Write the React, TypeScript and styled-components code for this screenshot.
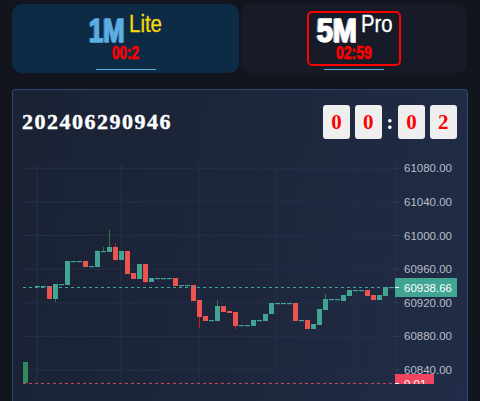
import React from "react";
import styled, { createGlobalStyle } from "styled-components";

const GlobalStyle = createGlobalStyle`
  html, body {
    margin: 0;
    padding: 0;
    background: #12151e;
  }
  body {
    font-family: "Liberation Sans", Arial, sans-serif;
  }
`;

const Page = styled.div`
  box-sizing: border-box;
  height: 401px;
  padding: 4px 12px 0;
  overflow: hidden;
`;

const Tabs = styled.div`
  display: grid;
  grid-template-columns: 227px 226px;
  gap: 2px;
`;

const Tab = styled.div<{ $active: boolean }>`
  box-sizing: border-box;
  height: 69px;
  padding-top: 7px;
  border-radius: 10px;
  background: ${(p) => (p.$active ? "#0e2b45" : "#161b27")};
  display: flex;
  flex-direction: column;
  align-items: center;
`;

const Badge = styled.div<{ $active: boolean }>`
  display: flex;
  flex-direction: column;
  align-items: center;
  padding: 2px 8px 3px;
  border: 2px solid ${(p) => (p.$active ? "#ff0000" : "transparent")};
  border-radius: 5px;
`;

const TitleRow = styled.div`
  display: flex;
  align-items: flex-start;
  gap: 4px;
  height: 30px;
`;

// text squeezed to a narrow face, the box keeps the squeezed width
const Squeezed = styled.span<{ $w: number; $s: number }>`
  display: inline-block;
  width: ${(p) => p.$w}px;
  white-space: nowrap;
  transform: scaleX(${(p) => p.$s});
  transform-origin: 0 0;
`;

const Interval = styled(Squeezed)<{ $color: string; $shade: string }>`
  font-weight: 700;
  font-size: 34px;
  line-height: 30px;
  color: ${(p) => p.$color};
  -webkit-text-stroke: 1.4px ${(p) => p.$color};
  text-shadow: -2px 0 0 ${(p) => p.$shade};
`;

const Tier = styled(Squeezed)<{ $color: string }>`
  font-size: 23px;
  line-height: 23px;
  margin-top: -2px;
  color: ${(p) => p.$color};
  -webkit-text-stroke: 0.3px ${(p) => p.$color};
`;

const Countdown = styled(Squeezed)`
  font-weight: 700;
  font-size: 18px;
  line-height: 15px;
  margin-top: 1px;
  color: #ff0000;
  -webkit-text-stroke: 0.6px #ff0000;
`;

const Underline = styled.div`
  width: 60px;
  height: 1px;
  margin-top: 3px;
  background: #5dade2;
`;

const Panel = styled.div`
  box-sizing: border-box;
  height: 330px;
  margin-top: 16px;
  border: 1px solid #2b4772;
  border-radius: 3px;
  background: linear-gradient(100deg, #1a2234 0%, #1d263b 50%, #212d48 100%);
`;

const Header = styled.div`
  display: flex;
  justify-content: space-between;
  align-items: center;
  height: 34px;
  padding: 15px 10px 0 9px;
`;

const Period = styled.div`
  font-family: "Liberation Serif", "Times New Roman", serif;
  font-weight: 700;
  font-size: 22px;
  letter-spacing: 1.5px;
  color: #ffffff;
  -webkit-text-stroke: 0.4px #ffffff;
`;

const Clock = styled.div`
  display: flex;
  align-items: center;
  gap: 4.5px;
`;

const DigitBox = styled.div`
  width: 27.4px;
  height: 34px;
  border-radius: 3px;
  background: #efefef;
  display: flex;
  align-items: center;
  justify-content: center;
  font-family: "Liberation Serif", "Times New Roman", serif;
  font-weight: 700;
  font-size: 21px;
  color: #ff0000;
`;

const Colon = styled.span`
  font-family: "Liberation Serif", "Times New Roman", serif;
  font-weight: 700;
  font-size: 20px;
  color: #ffffff;
`;

const ChartWrap = styled.div`
  margin-top: 19px;
  height: 226px;
  overflow: hidden;
`;

const PAD = 6; // room above the pane for the top price label
const TOP = 164 - PAD;
const LEFT = 13;
const UP = "#42a493";
const DOWN = "#ef5350";

// [open, close, high?, low?] as screen rows
const candles: number[][] = [
  [286, 286], [286, 286], [286, 299], [299, 284, 284, 302], [284, 284],
  [285, 261], [261, 261], [261, 261], [261, 267], [266, 266],
  [267, 251, 250], [251, 251, 247], [252, 247, 230], [247, 260, 243, 261], [260, 251],
  [251, 274], [273, 279], [279, 264], [264, 282, 264, 283], [282, 278],
  [278, 278], [278, 278], [278, 278], [278, 286], [285, 285],
  [285, 285], [285, 301], [300, 317, 300, 328], [316, 321], [320, 320],
  [321, 306, 300], [306, 312], [311, 313], [312, 326, 312, 329], [325, 325],
  [325, 325], [326, 320], [320, 320], [321, 314], [314, 303],
  [303, 303], [303, 303], [303, 303], [303, 321], [320, 320],
  [320, 329], [329, 324], [325, 309], [310, 299, 294], [299, 299],
  [299, 299], [301, 295], [296, 290], [290, 290], [290, 290],
  [290, 296], [295, 300], [300, 295], [296, 287], [287, 287],
];

const priceY = (p: number) => PAD + 4.3 + (61080 - p) * 0.8404;
const levels = [61080, 61040, 61000, 60960, 60920, 60880, 60840];
const vLines = [24, 108, 186, 264, 342];
const AXIS_X = 382;
const LAST_Y = 287.5 - TOP;
const ORDER_Y = 383.5 - TOP;
const LABEL_FONT = "Liberation Sans, Arial, sans-serif";

const Chart: React.FC = () => (
  <svg width={454} height={226} style={{ display: "block" }}>
    {levels.map((p) => (
      <line key={p} x1={10} x2={AXIS_X} y1={priceY(p)} y2={priceY(p)} stroke="#253049" strokeWidth={1} />
    ))}
    {vLines.map((x) => (
      <line key={x} x1={x} x2={x} y1={PAD} y2={226} stroke="#253049" strokeWidth={1} />
    ))}
    <line x1={AXIS_X + 0.5} x2={AXIS_X + 0.5} y1={PAD} y2={226} stroke="#2a3144" />

    <rect x={10} y={362 - TOP} width={5} height={21} fill="#2e8b5e" />

    {candles.map((c, i) => {
      const [o, cl] = c;
      const top = Math.min(o, cl) - TOP;
      const bottom = Math.max(o, cl) - TOP;
      const hi = (c[2] ?? Math.min(o, cl)) - TOP;
      const lo = (c[3] ?? Math.max(o, cl)) - TOP;
      const down = cl > o;
      const x = 35 - LEFT + i * 6;
      return (
        <g key={i}>
          {(hi < top || lo > bottom) && (
            <rect x={x + 2} y={hi} width={1} height={lo - hi} fill={down ? "#d01c1c" : "#2b7d2b"} />
          )}
          <rect x={x} y={top} width={5} height={Math.max(1.2, bottom - top)} fill={down ? DOWN : UP} />
        </g>
      );
    })}

    <line x1={10} x2={AXIS_X} y1={LAST_Y} y2={LAST_Y} stroke={UP} strokeDasharray="3 3" />
    <line x1={10} x2={AXIS_X} y1={ORDER_Y} y2={ORDER_Y} stroke="#c8435f" strokeDasharray="3 3" />

    {levels.map((p) => (
      <g key={p}>
        <line x1={AXIS_X} x2={AXIS_X + 4} y1={priceY(p)} y2={priceY(p)} stroke="#3a4257" />
        <text x={391} y={priceY(p)} dominantBaseline="central" fontFamily={LABEL_FONT} fontSize={11.5} fill="#b9bdc7">
          {p.toFixed(2)}
        </text>
      </g>
    ))}

    <rect x={AXIS_X} y={LAST_Y - 9.5} width={62} height={19} fill={UP} />
    <line x1={AXIS_X} x2={AXIS_X + 4} y1={LAST_Y} y2={LAST_Y} stroke="#ffffff" />
    <text x={391} y={LAST_Y} dominantBaseline="central" fontFamily={LABEL_FONT} fontSize={11.5} fill="#ffffff">
      60938.66
    </text>

    <rect x={AXIS_X} y={ORDER_Y - 9.5} width={39} height={19} fill="#ef4561" />
    <line x1={AXIS_X} x2={AXIS_X + 4} y1={ORDER_Y} y2={ORDER_Y} stroke="#ffffff" />
    <text x={391} y={ORDER_Y} dominantBaseline="central" fontFamily={LABEL_FONT} fontSize={11.5} fill="#ffffff">
      0.01
    </text>
  </svg>
);

const App: React.FC = () => {
  return (
    <Page>
      <GlobalStyle />
      <Tabs>
        <Tab $active>
          <Badge $active={false}>
            <TitleRow>
              <Interval $w={36} $s={0.76} $color="#5dade2" $shade="#2f6f9c">1M</Interval>
              <Tier $w={33} $s={0.89} $color="#f5d90a">Lite</Tier>
            </TitleRow>
            <Countdown $w={27} $s={0.75}>00:2</Countdown>
          </Badge>
          <Underline />
        </Tab>
        <Tab $active={false}>
          <Badge $active>
            <TitleRow>
              <Interval $w={40} $s={0.85} $color="#ffffff" $shade="#9aa0a8">5M</Interval>
              <Tier $w={30} $s={0.88} $color="#ffffff">Pro</Tier>
            </TitleRow>
            <Countdown $w={36} $s={0.78}>02:59</Countdown>
          </Badge>
          <Underline />
        </Tab>
      </Tabs>

      <Panel>
        <Header>
          <Period>202406290946</Period>
          <Clock>
            <DigitBox>0</DigitBox>
            <DigitBox>0</DigitBox>
            <Colon>:</Colon>
            <DigitBox>0</DigitBox>
            <DigitBox>2</DigitBox>
          </Clock>
        </Header>
        <ChartWrap>
          <Chart />
        </ChartWrap>
      </Panel>
    </Page>
  );
};

export default App;
